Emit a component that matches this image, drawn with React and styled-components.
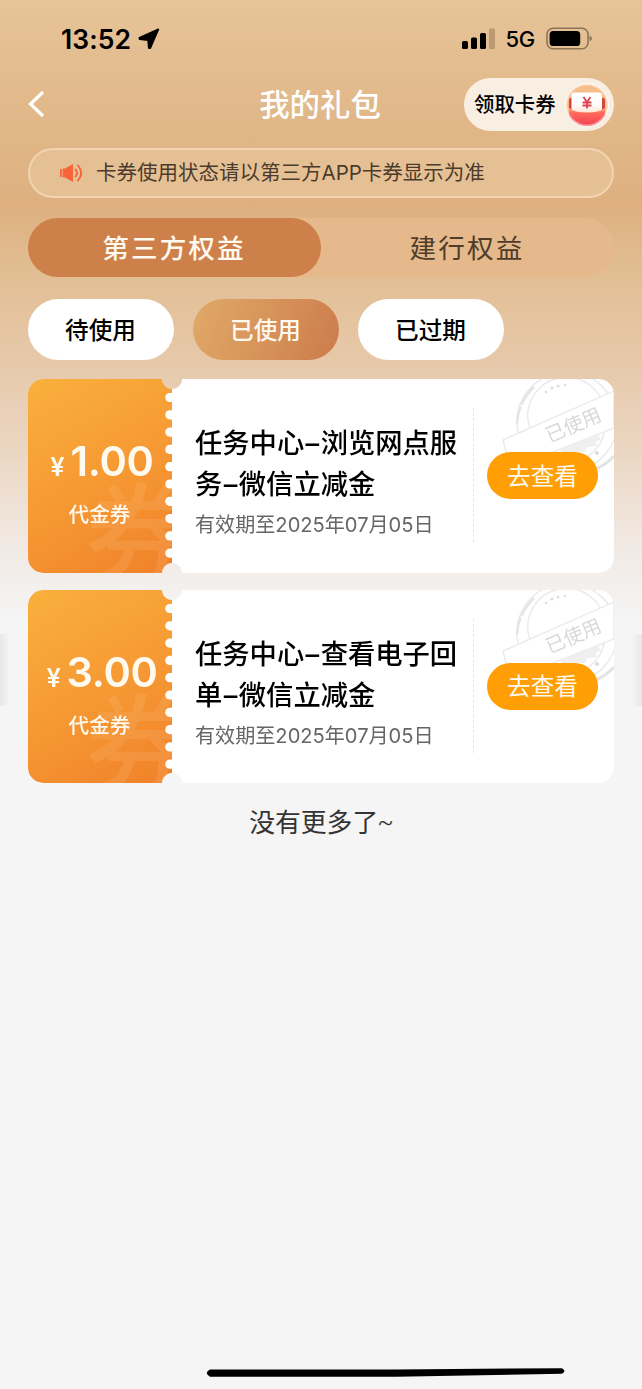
import React from 'react';
import styled, { createGlobalStyle, css } from 'styled-components';

const GlobalStyle = createGlobalStyle`
  * { box-sizing: border-box; }
  body {
    margin: 0;
    background: #f5f5f5;
    font-family: Inter, "Noto Sans CJK SC", sans-serif;
    color: #000;
  }
  button { font: inherit; border: 0; padding: 0; margin: 0; color: inherit; }
`;

const Page = styled.div`
  position: relative;
  height: 1389px;
  overflow: hidden;
  display: flex;
  flex-direction: column;
  background: linear-gradient(180deg, #e6c499 0, #e2ba8c 90px, #deb080 205px, #e2be94 275px, #e7caac 370px, #ebd7c3 455px, #f1e9e3 545px, #f5f5f5 620px);
`;

const StatusBar = styled.div`
  height: 78px;
  padding: 0 49px 0 61px;
  display: flex;
  align-items: center;
  justify-content: space-between;
`;

const StatusGroup = styled.div`
  display: flex;
  align-items: center;
  gap: ${(p) => p.$gap}px;
`;

const Clock = styled.span`
  font-size: 26.5px;
  font-weight: 600;
  letter-spacing: 0.1px;
  line-height: 32px;
`;

const Network = styled.span`
  font-size: 22px;
  font-weight: 500;
  line-height: 28px;
  letter-spacing: -0.3px;
`;

const Header = styled.header`
  height: 52px;
  padding: 0 28px;
  display: grid;
  grid-template-columns: 150px 1fr 150px;
  align-items: center;
`;

const BackIcon = styled.svg`
  margin-bottom: 1px;
`;

const Title = styled.h1`
  margin: 0;
  text-align: center;
  font-size: 30.4px;
  font-weight: 500;
  line-height: 44px;
  color: #fff;
  transform: translate(-1px, -0.5px);
`;

const ClaimButton = styled.button`
  height: 53px;
  padding: 0 5px 0 10px;
  display: flex;
  align-items: center;
  justify-content: space-between;
  border-radius: 27px;
  background: #f9eee2;
  font-size: 20.4px;
  font-weight: 500;
  white-space: nowrap;
`;

const ClaimLabel = styled.span`
  padding-bottom: 3px;
`;

const Notice = styled.div`
  margin: 18px 28px 0;
  height: 50px;
  padding: 0 30px;
  display: flex;
  align-items: center;
  gap: 13px;
  border: 2px solid #f2d4b1;
  border-radius: 25px;
  background: #e6c095;
  font-size: 20.5px;
  line-height: 30px;
  color: #4a3b2b;
`;

const Tabs = styled.div`
  margin: 20px 28px 0;
  height: 59px;
  display: flex;
  border-radius: 30px;
  background: #e5b98b;
`;

const Tab = styled.button`
  flex: 1;
  border-radius: 30px;
  padding-right: 1px;
  font-size: 26.6px;
  letter-spacing: 2.1px;
  line-height: 38px;
  background: ${(p) => (p.$active ? '#cd8049' : 'transparent')};
  color: ${(p) => (p.$active ? '#fffaf0' : '#4f3d29')};
  font-weight: ${(p) => (p.$active ? 500 : 400)};
`;

const Chips = styled.div`
  margin: 22px 28px 0;
  display: flex;
  gap: 19px;
`;

const Chip = styled.button`
  width: 146px;
  height: 61px;
  padding: 2px 1px 0 0;
  border-radius: 31px;
  background: #fff;
  font-size: 23.6px;
  font-weight: 500;
  line-height: 34px;
  ${(p) =>
    p.$active &&
    css`
      background: linear-gradient(110deg, #e0a767 5%, #cd7e4d 95%);
      color: #fffaf0;
    `}
`;

const CouponList = styled.main`
  margin: 19px 28px 0;
  display: flex;
  flex-direction: column;
  gap: 17px;
`;

const Coupon = styled.article`
  height: 193.5px;
  display: flex;
  border-radius: 15px;
  overflow: hidden;
  background: #fff;
  mask-image: radial-gradient(circle at 144px 0, transparent 9.5px, #000 10.5px),
    radial-gradient(circle at 144px 100%, transparent 9.5px, #000 10.5px);
  mask-composite: intersect;
`;

const Value = styled.div`
  position: relative;
  width: 144px;
  overflow: hidden;
  padding-top: 57px;
  display: flex;
  flex-direction: column;
  align-items: center;
  background: linear-gradient(150deg, #f9af3c 2%, #f69a34 50%, #f08129 100%);
  color: #fffaf0;
`;

const Watermark = styled.span`
  position: absolute;
  left: 57px;
  top: 96px;
  font-size: 108px;
  line-height: 120px;
  font-weight: 500;
  color: rgba(255, 205, 160, 0.15);
`;

const Perforation = styled.svg`
  position: absolute;
  right: 0;
  top: 0;
`;

const Price = styled.div`
  position: relative;
  display: flex;
  align-items: baseline;
  gap: 6px;
  margin-left: 4px;
  font-size: 41.5px;
  font-weight: 600;
  line-height: 50px;
  letter-spacing: -0.3px;
`;

const Currency = styled.span`
  font-size: 25.5px;
`;

const Kind = styled.div`
  position: relative;
  margin: 8px 1px 0 0;
  font-size: 20.6px;
  font-weight: 500;
  line-height: 30px;
`;

const Info = styled.div`
  width: 301px;
  padding: 44px 0 0 23px;
`;

const Name = styled.h2`
  margin: 0;
  font-size: 27.3px;
  font-weight: 500;
  line-height: 41px;
  white-space: nowrap;
`;

const Dash = styled.span`
  display: inline-block;
  width: 16.5px;
  text-align: center;
`;

const Expiry = styled.p`
  margin: 5px 0 0;
  font-size: 20.1px;
  line-height: 30px;
  color: #666;
  white-space: nowrap;
`;

const Action = styled.div`
  position: relative;
  flex: 1;
  display: flex;
  align-items: center;
  padding-left: 14px;
`;

const Divider = styled.i`
  position: absolute;
  left: 0;
  top: 29px;
  height: 134px;
  border-left: 1.5px dashed #e6e6e6;
`;

const Stamp = styled.svg`
  position: absolute;
  right: 0;
  top: 0;
`;

const ViewButton = styled.button`
  position: relative;
  width: 111px;
  height: 47px;
  padding-top: 2px;
  border-radius: 24px;
  background: #ff9f05;
  color: #fffaf0;
  font-size: 23.6px;
  line-height: 34px;
`;

const ListEnd = styled.p`
  margin: 21px 0 0;
  text-align: center;
  font-size: 25.8px;
  line-height: 38px;
  color: #333;
`;

const Tilde = styled.span`
  font-family: "Liberation Serif", serif;
  font-size: 27px;
`;

const EdgeShade = styled.i`
  position: absolute;
  top: 634px;
  width: 10px;
  height: 72px;
  ${(p) => (p.$right ? 'right: 0;' : 'left: 0;')}
  background: linear-gradient(${(p) => (p.$right ? '270deg' : '90deg')}, #e7e7e7, rgba(245, 245, 245, 0));
`;

const HomeIndicator = styled.svg`
  position: absolute;
  left: 206px;
  bottom: 10px;
`;

function LocationArrow() {
  return (
    <svg width="22" height="22" viewBox="0 0 22 22">
      <path d="M20.300 1.400 12.300 20 L10.800 20 10.200 12 1.500 11 1.500 9.800Z" fill="#000" stroke="#000" strokeWidth="1.800" strokeLinejoin="round" />
    </svg>
  );
}

function Signal() {
  return (
    <svg width="33" height="22" viewBox="0 0 33 22">
      <rect x="0" y="13" width="6" height="8" rx="1.600" />
      <rect x="9" y="9.500" width="6" height="11.500" rx="1.600" />
      <rect x="18" y="5" width="6" height="16" rx="1.600" />
      <rect x="27" y="0.500" width="6" height="20.500" rx="1.600" fill="#b99a73" />
    </svg>
  );
}

function Battery() {
  return (
    <svg width="47" height="24" viewBox="0 0 47 24">
      <rect x="1" y="1.200" width="41" height="20.600" rx="6" fill="none" stroke="#8d7455" strokeWidth="1.600" />
      <rect x="3.600" y="4" width="30.600" height="15" rx="3.600" />
      <path d="M43.500 8.500q5 3 0 6Z" fill="#8d7455" />
    </svg>
  );
}

function RedPacket() {
  return (
    <svg width="44" height="44" viewBox="0 0 44 44">
      <defs>
        <linearGradient id="packet" x1="0" y1="0" x2="0" y2="1">
          <stop offset="0" stopColor="#fbb58a" />
          <stop offset="0.250" stopColor="#ff6a5c" />
          <stop offset="1" stopColor="#f23d50" />
        </linearGradient>
        <linearGradient id="slip" x1="0" y1="0" x2="0" y2="1">
          <stop offset="0.500" stopColor="#fff" />
          <stop offset="1" stopColor="#ffe2cb" />
        </linearGradient>
        <clipPath id="disc"><circle cx="22" cy="22" r="21" /></clipPath>
      </defs>
      <circle cx="22" cy="22" r="21.500" fill="#f6bd88" stroke="#fff" strokeWidth="1" />
      <g clipPath="url(#disc)">
        <path d="M4 17q0-2 2-2h32q2 0 2 2v27H4Z" fill="#d94340" />
        <rect x="6.500" y="9.500" width="30.500" height="22" rx="2.500" fill="url(#slip)" />
        <path d="M4 25q6 4.500 18 4.500T40 25v19H4Z" fill="url(#packet)" />
      </g>
      <circle cx="22" cy="22" r="20.600" fill="none" stroke="#fff" strokeOpacity=".45" strokeWidth="2" />
      <path d="m18.500 14 3.500 5.200 3.500-5.200M17.500 19.500h9M17.500 22.500h9M22 19.500v6" fill="none" stroke="#df4250" strokeWidth="1.800" />
    </svg>
  );
}

function Speaker() {
  return (
    <svg width="23" height="20" viewBox="0 0 23 20">
      <path d="M0 6h1.800v8H0ZM2.600 5.500h2.400L13 1v18L5 14.500H2.600Z" fill="#f9653a" />
      <path d="M15.500 6.500q3 3.500 0 7M18 2.500q6.500 7.500 0 15" fill="none" stroke="#f9653a" strokeWidth="1.900" strokeLinecap="round" />
    </svg>
  );
}

function UsedStamp() {
  return (
    <Stamp width="112" height="100" viewBox="0 0 112 100">
      <g fill="none" stroke="#ebebeb" strokeWidth="1.500">
        <circle cx="65" cy="43" r="50" />
        <path d="M28 50a38 38 0 0 1 73-26" />
        <path d="M103 44a38 38 0 0 1-20 35" />
      </g>
      <g fill="#dedede">
        <circle cx="44" cy="13" r="1.300" />
        <circle cx="50" cy="9" r="1.600" />
        <circle cx="56" cy="7" r="1.500" />
        <circle cx="63" cy="6" r="1.200" />
      </g>
      <path d="m1 61 111-49v37L8 90Z" fill="#fff" stroke="#ebebeb" strokeWidth="1.500" />
      <path d="m58 71 38-15 3 4-5 3 1 4-10 1-2 5H60Z" fill="#efefef" />
      <circle cx="95" cy="74" r="2" fill="#dcdcdc" />
      <text x="71" y="53" transform="rotate(-23 71 45)" textAnchor="middle" fontSize="19.500" fill="#d9d9d9">已使用</text>
      <path d="M91 91q12-4 21-14" fill="none" stroke="#e4e4e4" strokeWidth="3" />
      <path d="M15 44q1-20 17-36" fill="none" stroke="#e5e5e5" strokeWidth="2.500" strokeDasharray="17 2 23 3" />
    </Stamp>
  );
}

const scallops = Array.from({ length: 10 }, (_, i) => 18.5 + i * 17.3);

function CouponCard({ price, lines }) {
  return (
    <Coupon>
      <Value>
        <Watermark>券</Watermark>
        <Price><Currency>¥</Currency>{price}</Price>
        <Kind>代金券</Kind>
        <Perforation width="8" height="194" viewBox="0 0 8 194">
          {scallops.map((y) => (
            <rect key={y} x="1.200" y={y - 4.6} width="14" height="9.200" rx="4.600" fill="#fff" />
          ))}
        </Perforation>
      </Value>
      <Info>
        <Name>
          {lines.map(([before, after]) => (
            <div key={before}>{before}<Dash>–</Dash>{after}</div>
          ))}
        </Name>
        <Expiry>有效期至2025年07月05日</Expiry>
      </Info>
      <Action>
        <Divider />
        <UsedStamp />
        <ViewButton>去查看</ViewButton>
      </Action>
    </Coupon>
  );
}

export default function App() {
  return (
    <>
      <GlobalStyle />
      <Page>
        <StatusBar>
          <StatusGroup $gap={7}>
            <Clock>13:52</Clock>
            <LocationArrow />
          </StatusGroup>
          <StatusGroup $gap={11}>
            <Signal />
            <Network>5G</Network>
            <Battery />
          </StatusGroup>
        </StatusBar>
        <Header>
          <BackIcon width="18" height="28" viewBox="0 0 18 28">
            <path d="M15 2 2.500 14 15 26" fill="none" stroke="#fff" strokeWidth="3.200" />
          </BackIcon>
          <Title>我的礼包</Title>
          <ClaimButton><ClaimLabel>领取卡券</ClaimLabel><RedPacket /></ClaimButton>
        </Header>
        <Notice><Speaker />卡券使用状态请以第三方APP卡券显示为准</Notice>
        <Tabs>
          <Tab $active>第三方权益</Tab>
          <Tab>建行权益</Tab>
        </Tabs>
        <Chips>
          <Chip>待使用</Chip>
          <Chip $active>已使用</Chip>
          <Chip>已过期</Chip>
        </Chips>
        <CouponList>
          <CouponCard price="1.00" lines={[['任务中心', '浏览网点服'], ['务', '微信立减金']]} />
          <CouponCard price="3.00" lines={[['任务中心', '查看电子回'], ['单', '微信立减金']]} />
        </CouponList>
        <ListEnd>没有更多了<Tilde>~</Tilde></ListEnd>
        <EdgeShade />
        <EdgeShade $right />
        <HomeIndicator width="360" height="12" viewBox="0 0 360 12">
          <path d="M4 2.500H190L356 1.200q5 2.800 0 5.500L190 9.800H4Q-2.500 6 4 2.500Z" />
        </HomeIndicator>
      </Page>
    </>
  );
}
